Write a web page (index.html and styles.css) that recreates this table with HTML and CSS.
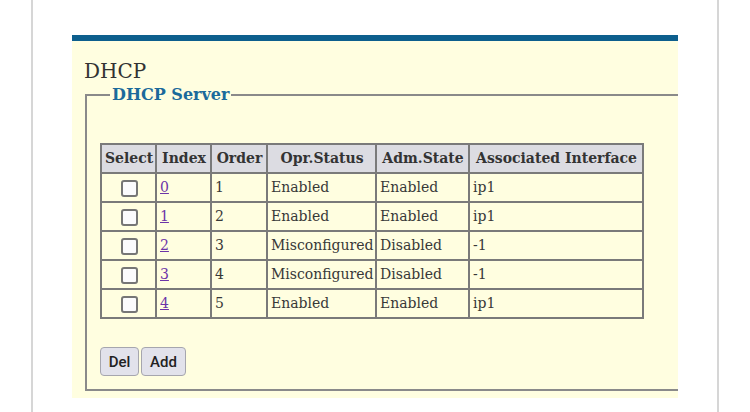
FILE: index.html
```html
<!DOCTYPE html>
<html>
<head>
<meta charset="utf-8">
<link rel="stylesheet" href="styles.css">
</head>
<body>
<div class="page">
  <div class="panel">
    <div class="title">DHCP</div>
    <fieldset class="group">
      <legend class="group-title">DHCP Server</legend>
      <table class="grid">
        <thead>
          <tr>
            <th class="c-sel">Select</th>
            <th class="c-idx">Index</th>
            <th class="c-ord">Order</th>
            <th class="c-opr">Opr.Status</th>
            <th class="c-adm">Adm.State</th>
            <th class="c-if">Associated Interface</th>
          </tr>
        </thead>
        <tbody>
          <tr>
            <td class="center"><input type="checkbox" class="check"></td>
            <td><a href="#" class="link">0</a></td>
            <td>1</td><td>Enabled</td><td>Enabled</td><td>ip1</td>
          </tr>
          <tr>
            <td class="center"><input type="checkbox" class="check"></td>
            <td><a href="#" class="link">1</a></td>
            <td>2</td><td>Enabled</td><td>Enabled</td><td>ip1</td>
          </tr>
          <tr>
            <td class="center"><input type="checkbox" class="check"></td>
            <td><a href="#" class="link">2</a></td>
            <td>3</td><td>Misconfigured</td><td>Disabled</td><td>-1</td>
          </tr>
          <tr>
            <td class="center"><input type="checkbox" class="check"></td>
            <td><a href="#" class="link">3</a></td>
            <td>4</td><td>Misconfigured</td><td>Disabled</td><td>-1</td>
          </tr>
          <tr>
            <td class="center"><input type="checkbox" class="check"></td>
            <td><a href="#" class="link">4</a></td>
            <td>5</td><td>Enabled</td><td>Enabled</td><td>ip1</td>
          </tr>
        </tbody>
      </table>
      <div class="actions">
        <button class="btn btn-del">Del</button>
        <button class="btn btn-add">Add</button>
      </div>
    </fieldset>
  </div>
</div>
</body>
</html>
```

FILE: styles.css
```css
html, body {
  margin: 0;
  padding: 0;
  background: #ffffff;
}

.page {
  box-sizing: border-box;
  margin: 0 31px;
  min-height: 412px;
  border-left: 2px solid #d6d6d6;
  border-right: 2px solid #d6d6d6;
  padding: 35px 39px 0 39px;
}

.panel {
  border-top: 6px solid #0d5f8d;
  background: #fffee0;
  overflow: hidden;
  padding: 0 0 7px 0;
  font-family: "DejaVu Serif", serif;
  color: #383838;
}

.title {
  margin: 18px 0 0 12px;
  font-size: 20px;
  line-height: 24px;
  color: #333333;
}

.group {
  margin: 2px -40px 0 13px;
  border: 2px solid #8a8a8a;
  padding: 0 0 13px 13px;
  min-width: 0;
}

.group-title {
  margin-left: 10px;
  padding: 0 2px;
  font-size: 16px;
  line-height: 19px;
  font-weight: bold;
  color: #1b6a9b;
}

.grid {
  margin-top: 39px;
  border-collapse: separate;
  border-spacing: 0;
  border: 1px solid #7a7a7a;
  table-layout: fixed;
  width: 544px;
  font-size: 14px;
}

.grid th,
.grid td {
  border: 1px solid #7a7a7a;
  padding: 0 2px 0 3px;
  line-height: 27px;
  white-space: nowrap;
  vertical-align: middle;
  overflow: visible;
}

.grid th {
  background: #dcdce2;
  font-weight: bold;
  color: #333333;
  text-align: center;
}

.grid td {
  text-align: left;
}

.grid td.center {
  text-align: center;
}

.c-sel { width: 48px; }
.c-idx { width: 48px; }
.c-ord { width: 49px; }
.c-opr { width: 102px; }
.c-adm { width: 86px; }
.c-if  { width: 167px; }

.check {
  -webkit-appearance: none;
  appearance: none;
  box-sizing: border-box;
  width: 17px;
  height: 17px;
  margin: 0;
  border: 2px solid #767676;
  border-radius: 3px;
  background: #fbfbfd;
  vertical-align: middle;
}

.link {
  color: #6c34a8;
  text-decoration: underline;
}

.actions {
  margin-top: 28px;
  display: flex;
  gap: 2px;
}

.btn {
  box-sizing: border-box;
  height: 29px;
  padding: 0;
  border: 1px solid #a6a6ae;
  border-radius: 4px;
  background: #e2e2eb;
  font-family: Roboto, "Noto Sans", sans-serif;
  font-size: 15px;
  font-weight: 500;
  color: #222222;
}

.btn-del { width: 39px; }
.btn-add { width: 45px; }
```
